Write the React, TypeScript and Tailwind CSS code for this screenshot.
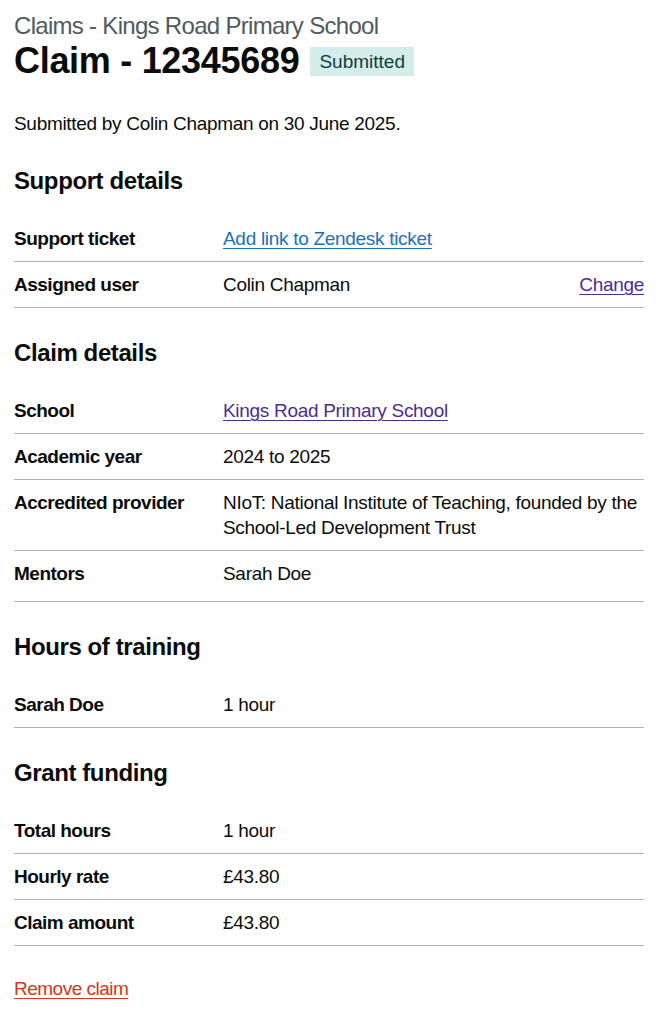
type Row = {
  key: string;
  value: React.ReactNode;
  action?: React.ReactNode;
  extra?: boolean;
};

const linkBlue = "text-[#1d70b8] underline underline-offset-[3px] decoration-1";
const linkVisited = "text-[#4c2c92] underline underline-offset-[3px] decoration-1";

const SummaryList = ({ rows }: { rows: Row[] }) => (
  <dl className="mb-[30px]">
    {rows.map((row) => (
      <div key={row.key} className="flex border-b border-[#b1b4b6]">
        <dt className="w-[209px] shrink-0 pt-[10px] pb-[10px] pr-5 font-bold tracking-[-0.5px]">{row.key}</dt>
        <dd className={`flex-1 pt-[10px] ${row.extra ? "pb-[15px]" : "pb-[10px]"} ${row.action ? "pr-5" : ""}`}>
          {row.value}
        </dd>
        {row.action && <dd className="w-[20%] py-[10px] text-right">{row.action}</dd>}
      </div>
    ))}
  </dl>
);

const Heading = ({ children }: { children: React.ReactNode }) => (
  <h2 className="mb-5 text-[24px] leading-[30px] font-bold tracking-[-0.4px]">{children}</h2>
);

export default function App() {
  return (
    <div className="min-h-screen bg-white pl-[14px] pr-[21px] pt-[11px] pb-8 font-['Liberation_Sans',Arial,sans-serif] text-[19px] leading-[25px] tracking-[-0.3px] text-[#0b0c0c]">
      <span className="block text-[24px] leading-[30px] tracking-[-0.7px] text-[#505a5f]">
        Claims - Kings Road Primary School
      </span>
      <h1 className="mb-[30px] flex items-center gap-[11px] text-[36px] leading-[40px] font-bold tracking-[-0.3px]">
        Claim - 12345689
        <strong className="bg-[#d4ecea] px-[9px] pt-[2px] pb-[2px] text-[19px] leading-[25px] font-normal tracking-normal text-[#10403c]">
          Submitted
        </strong>
      </h1>

      <p className="mb-[30px]">Submitted by Colin Chapman on 30 June 2025.</p>

      <Heading>Support details</Heading>
      <SummaryList
        rows={[
          {
            key: "Support ticket",
            value: (
              <a href="#" className={linkBlue}>
                Add link to Zendesk ticket
              </a>
            ),
          },
          {
            key: "Assigned user",
            value: "Colin Chapman",
            action: (
              <a href="#" className={linkVisited}>
                Change
              </a>
            ),
          },
        ]}
      />

      <Heading>Claim details</Heading>
      <SummaryList
        rows={[
          {
            key: "School",
            value: (
              <a href="#" className={linkVisited}>
                Kings Road Primary School
              </a>
            ),
          },
          { key: "Academic year", value: "2024 to 2025" },
          {
            key: "Accredited provider",
            value: "NIoT: National Institute of Teaching, founded by the School-Led Development Trust",
          },
          { key: "Mentors", value: "Sarah Doe", extra: true },
        ]}
      />

      <Heading>Hours of training</Heading>
      <SummaryList rows={[{ key: "Sarah Doe", value: "1 hour" }]} />

      <Heading>Grant funding</Heading>
      <SummaryList
        rows={[
          { key: "Total hours", value: "1 hour" },
          { key: "Hourly rate", value: "£43.80" },
          { key: "Claim amount", value: "£43.80" },
        ]}
      />

      <a href="#" className="tracking-[-0.5px] text-[#d4351c] underline underline-offset-[3px] decoration-1">
        Remove claim
      </a>
    </div>
  );
}
